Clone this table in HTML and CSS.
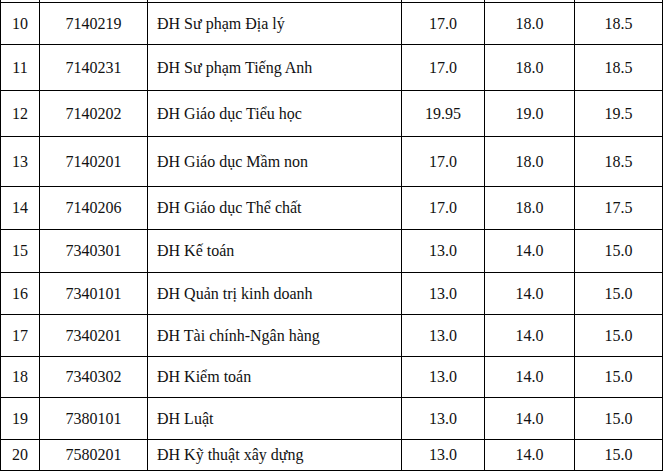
FILE: index.html
```html
<!DOCTYPE html>
<html lang="vi">
<head>
<meta charset="utf-8">
<title>Bảng điểm</title>
<link rel="stylesheet" href="styles.css">
</head>
<body>
<table class="scores">
  <colgroup>
    <col class="c-stt"><col class="c-code"><col class="c-name"><col class="c-y1"><col class="c-y2"><col class="c-y3">
  </colgroup>
  <tbody>
    <tr class="cut"><td></td><td></td><td></td><td></td><td></td><td></td></tr>
    <tr class="h42"><td>10</td><td>7140219</td><td class="name">ĐH Sư phạm Địa lý</td><td>17.0</td><td>18.0</td><td>18.5</td></tr>
    <tr class="h46"><td>11</td><td>7140231</td><td class="name">ĐH Sư phạm Tiếng Anh</td><td>17.0</td><td>18.0</td><td>18.5</td></tr>
    <tr class="h46"><td>12</td><td>7140202</td><td class="name">ĐH Giáo dục Tiểu học</td><td>19.95</td><td>19.0</td><td>19.5</td></tr>
    <tr class="h50"><td>13</td><td>7140201</td><td class="name">ĐH Giáo dục Mầm non</td><td>17.0</td><td>18.0</td><td>18.5</td></tr>
    <tr class="h43"><td>14</td><td>7140206</td><td class="name">ĐH Giáo dục Thể chất</td><td>17.0</td><td>18.0</td><td>17.5</td></tr>
    <tr class="h43"><td>15</td><td>7340301</td><td class="name">ĐH Kế toán</td><td>13.0</td><td>14.0</td><td>15.0</td></tr>
    <tr class="h42"><td>16</td><td>7340101</td><td class="name">ĐH Quản trị kinh doanh</td><td>13.0</td><td>14.0</td><td>15.0</td></tr>
    <tr class="h42"><td>17</td><td>7340201</td><td class="name">ĐH Tài chính-Ngân hàng</td><td>13.0</td><td>14.0</td><td>15.0</td></tr>
    <tr class="h41"><td>18</td><td>7340302</td><td class="name">ĐH Kiểm toán</td><td>13.0</td><td>14.0</td><td>15.0</td></tr>
    <tr class="h42"><td>19</td><td>7380101</td><td class="name">ĐH Luật</td><td>13.0</td><td>14.0</td><td>15.0</td></tr>
    <tr class="h31"><td>20</td><td>7580201</td><td class="name">ĐH Kỹ thuật xây dựng</td><td>13.0</td><td>14.0</td><td>15.0</td></tr>
  </tbody>
</table>
</body>
</html>
```
FILE: styles.css
```css
html, body {
  margin: 0;
  padding: 0;
  background: #fff;
  font-family: "DejaVu Serif", serif;
}

.scores {
  border-collapse: collapse;
  table-layout: fixed;
  width: 662px;
  font-size: 16px;
  color: #111;
}

.c-stt { width: 39px; }
.c-code { width: 108px; }
.c-name { width: 254px; }
.c-y1 { width: 83px; }
.c-y2 { width: 90px; }
.c-y3 { width: 88px; }

.scores td {
  border: 1px solid #000;
  padding: 0 4px;
  text-align: center;
  vertical-align: middle;
  white-space: nowrap;
  font-family: "Liberation Serif", "DejaVu Serif", serif;
}

.scores td.name {
  text-align: left;
  padding-left: 9px;
}

.scores tr.cut td {
  border-top: none;
  height: 2px;
  padding: 0;
  line-height: 0;
  font-size: 0;
}

.h31 { height: 31px; }
.h41 { height: 41px; }
.h42 { height: 42px; }
.h43 { height: 43px; }
.h46 { height: 46px; }
.h50 { height: 50px; }
```
